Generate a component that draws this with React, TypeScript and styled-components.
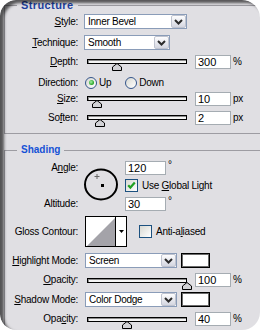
import React from "react";
import styled, { createGlobalStyle } from "styled-components";

const GlobalStyle = createGlobalStyle`
  * { box-sizing: border-box; }
  html, body { margin: 0; padding: 0; background: #ffffff; }
  body { font-family: "Liberation Sans", Arial, sans-serif; }
`;

const Frame = styled.div`
  position: relative;
  width: 260px;
  height: 330px;
  overflow: hidden;
  border-radius: 16px 18px 18px 16px;
  background: #e0dfe3;
  color: #000;
  font-size: 10px;
  letter-spacing: -0.25px;

  &::after {
    content: "";
    position: absolute;
    inset: 0;
    border-radius: inherit;
    box-shadow: inset 4px 3px 3px rgba(0, 0, 0, 0.62);
    pointer-events: none;
  }
`;

const Group = styled.fieldset<{ $mt: number; $pb?: number; $closed?: boolean }>`
  min-width: 0;
  margin: ${(p) => p.$mt}px 0 0 4px;
  padding: 0 0 ${(p) => p.$pb ?? 0}px 0;
  border: 0 solid #9d9ca2;
  border-width: 1px 0 ${(p) => (p.$closed ? 1 : 0)}px 1px;
`;

const Legend = styled.legend<{ $top?: boolean }>`
  margin-left: 12px;
  padding: 0 4px;
  font-weight: bold;
  font-size: ${(p) => (p.$top ? 11 : 10)}px;
  letter-spacing: ${(p) => (p.$top ? 0.4 : 0)}px;
  line-height: 12px;
  color: ${(p) => (p.$top ? "#1d3f9e" : "#1652d6")};
`;

const Content = styled.div<{ $pt: number }>`
  padding-top: ${(p) => p.$pt}px;
`;

const Row = styled.div<{ $mt?: number; $h?: number }>`
  display: flex;
  align-items: center;
  height: ${(p) => p.$h ?? 15}px;
  margin-top: ${(p) => p.$mt ?? 0}px;
`;

const Label = styled.span`
  flex: none;
  width: 73px;
  margin-right: 6px;
  text-align: right;
  white-space: nowrap;
  line-height: 12px;
`;

const Key = styled.span`
  text-decoration: underline;
  text-underline-offset: 1px;
`;

const Select = styled.div<{ $w: number; $ml?: number }>`
  display: flex;
  align-items: center;
  flex: none;
  width: ${(p) => p.$w}px;
  height: 15px;
  margin-left: ${(p) => p.$ml ?? 0}px;
  padding-left: 3px;
  border: 1px solid #8a9cb8;
  background: #ffffff;
  line-height: 13px;
`;

const SelectValue = styled.span`
  flex: 1;
  white-space: nowrap;
`;

const SelectButton = styled.span`
  display: flex;
  align-items: center;
  justify-content: center;
  width: 15px;
  height: 13px;
  border: 1px solid #bfc3cf;
  border-radius: 2px;
  background: linear-gradient(#fdfdfe, #d4d6e0);
`;

const Track = styled.div`
  position: relative;
  flex: none;
  width: 100px;
  height: 5px;
  margin: 0 8px 0 3px;
  border: 1px solid #000;
  background: #f4f4f4;
  box-shadow: inset 1px 1px 0 #8c8c8c;
`;

const Thumb = styled.svg`
  position: absolute;
  top: 3px;
`;

const NumInput = styled.input<{ $w?: number }>`
  flex: none;
  width: ${(p) => p.$w ?? 36}px;
  height: 14px;
  margin: 0;
  padding: 0 0 0 2px;
  border: 1px solid #a5acb2;
  background: #ffffff;
  color: #000;
  font: 11px "Liberation Sans", Arial, sans-serif;
  outline: none;
`;

const Unit = styled.span<{ $sup?: boolean }>`
  margin-left: 2px;
  align-self: ${(p) => (p.$sup ? "flex-start" : "center")};
  line-height: ${(p) => (p.$sup ? 8 : 12)}px;
`;

const RadioOption = styled.span<{ $mr?: number; $ml?: number }>`
  display: flex;
  align-items: center;
  gap: 2px;
  margin: 0 ${(p) => p.$mr ?? 0}px 0 ${(p) => p.$ml ?? 0}px;
`;

const Radio = styled.span<{ $on?: boolean }>`
  display: flex;
  align-items: center;
  justify-content: center;
  width: 12px;
  height: 12px;
  border: 1px solid #34558b;
  border-radius: 50%;
  background: linear-gradient(135deg, #d8d8d2, #ffffff);

  &::after {
    content: "";
    display: ${(p) => (p.$on ? "block" : "none")};
    width: 5px;
    height: 5px;
    border-radius: 50%;
    background: radial-gradient(circle at 40% 40%, #a6f0a6, #21a121 70%);
  }
`;

const CheckOption = styled.span<{ $ml?: number }>`
  display: flex;
  align-items: center;
  gap: 4px;
  margin-left: ${(p) => p.$ml ?? 0}px;
`;

const CheckText = styled.span`
  white-space: nowrap;
`;

const Check = styled.span`
  display: flex;
  align-items: center;
  justify-content: center;
  width: 13px;
  height: 13px;
  border: 1px solid #1c5180;
  background: linear-gradient(135deg, #d8d8d2, #ffffff);
`;

const AngleGrid = styled.div`
  display: grid;
  grid-template-columns: 79px 41px auto;
  grid-template-rows: 14px 17px 19px;
  margin-top: 5px;
`;

const GridLabel = styled(Label)<{ $row: number }>`
  grid-column: 1;
  grid-row: ${(p) => p.$row};
  align-self: end;
  line-height: 14px;
`;

const Dial = styled.svg`
  grid-column: 2;
  grid-row: 1 / 4;
  margin-top: 6px;
`;

const Cell = styled.div<{ $row: number }>`
  display: flex;
  align-items: center;
  grid-column: 3;
  grid-row: ${(p) => p.$row};
  align-self: end;
`;

const Contour = styled.div`
  display: flex;
  flex: none;
  width: 42px;
  height: 31px;
  margin-left: 1px;
  border: 1px solid #000;
  background: #ffffff;
`;

const ContourArrow = styled.span`
  display: flex;
  align-items: center;
  justify-content: center;
  flex: 1;
  border-left: 1px solid #000;
`;

const Swatch = styled.span`
  flex: none;
  width: 29px;
  height: 15px;
  margin-left: 4px;
  border: 1px solid #000;
  background: #ffffff;
  box-shadow: inset 0 0 0 1px #6b6b6b;
`;

const accel = (text: string, i?: number) =>
  i === undefined ? (
    text
  ) : (
    <>
      {text.slice(0, i)}
      <Key>{text[i]}</Key>
      {text.slice(i + 1)}
    </>
  );

const Chevron = () => (
  <svg width="9" height="6" viewBox="0 0 9 6">
    <polyline points="1,1 4.5,4.5 8,1" fill="none" stroke="#2b2b2b" strokeWidth="2" />
  </svg>
);

const Dropdown = ({ value, w, ml }: { value: string; w: number; ml?: number }) => (
  <Select $w={w} $ml={ml}>
    <SelectValue>{value}</SelectValue>
    <SelectButton>
      <Chevron />
    </SelectButton>
  </Select>
);

interface SliderRowProps {
  label: string;
  k?: number;
  value: string;
  unit: string;
  pos: number;
  mt: number;
  h?: number;
}

const SliderRow = ({ label, k, value, unit, pos, mt, h }: SliderRowProps) => (
  <Row $mt={mt} $h={h}>
    <Label>{accel(label, k)}</Label>
    <Track>
      <Thumb width="10" height="8" viewBox="0 0 10 8" style={{ left: Math.round(pos * 100) - 6 }}>
        <path d="M5 0.5 L9.5 4 V7.5 H0.5 V4 Z" fill="#d2d2d6" stroke="#000" strokeWidth="1" />
      </Thumb>
    </Track>
    <NumInput readOnly value={value} />
    <Unit>{unit}</Unit>
  </Row>
);

const Tick = () => (
  <svg width="9" height="9" viewBox="0 0 9 9">
    <polyline points="1.2,4.2 3.4,6.6 7.8,1.6" fill="none" stroke="#21a121" strokeWidth="2.2" />
  </svg>
);

const App = () => {
  return (
    <>
      <GlobalStyle />
      <Frame>
        <Group $mt={-1} $pb={8} $closed>
          <Legend $top>Structure</Legend>
          <Content $pt={3}>
            <Row>
              <Label>{accel("Style:", 0)}</Label>
              <Dropdown value="Inner Bevel" w={103} />
            </Row>
            <Row $mt={6}>
              <Label>{accel("Technique:", 0)}</Label>
              <Dropdown value="Smooth" w={86} />
            </Row>
            <SliderRow label="Depth:" k={0} value="300" unit="%" pos={0.3} mt={4} />
            <Row $mt={6}>
              <Label>Direction:</Label>
              <RadioOption $ml={1} $mr={14}>
                <Radio $on />
                Up
              </RadioOption>
              <RadioOption>
                <Radio />
                Down
              </RadioOption>
            </Row>
            <SliderRow label="Size:" k={0} value="10" unit="px" pos={0.1} mt={1} />
            <SliderRow label="Soften:" k={2} value="2" unit="px" pos={0.13} mt={4} />
          </Content>
        </Group>

        <Group $mt={10}>
          <Legend>Shading</Legend>
          <AngleGrid>
            <GridLabel $row={1}>{accel("Angle:", 1)}</GridLabel>
            <Dial width="36" height="34" viewBox="0 0 36 34">
              <ellipse cx="17" cy="17.5" rx="16" ry="15" fill="none" stroke="#000" strokeWidth="2" />
              <path d="M10.5 9.5 H15.5 M13 7 V12" stroke="#666" strokeWidth="1" />
              <rect x="17" y="17" width="3" height="3" fill="#000" />
            </Dial>
            <Cell $row={1}>
              <NumInput readOnly value="120" $w={41} />
              <Unit $sup>°</Unit>
            </Cell>
            <Cell $row={2}>
              <CheckOption>
                <Check>
                  <Tick />
                </Check>
                <CheckText>{accel("Use Global Light", 4)}</CheckText>
              </CheckOption>
            </Cell>
            <GridLabel $row={3}>Altitude:</GridLabel>
            <Cell $row={3}>
              <NumInput readOnly value="30" $w={41} />
              <Unit $sup>°</Unit>
            </Cell>
          </AngleGrid>

          <Row $mt={5} $h={31}>
            <Label>Gloss Contour:</Label>
            <Contour>
              <svg width="29" height="29" viewBox="0 0 29 29">
                <rect width="29" height="29" fill="#ffffff" />
                <polygon points="1,29 29,1 29,29" fill="#a4a3a9" />
              </svg>
              <ContourArrow>
                <svg width="5" height="3" viewBox="0 0 5 3">
                  <polygon points="0,0 5,0 2.5,3" fill="#000" />
                </svg>
              </ContourArrow>
            </Contour>
            <CheckOption $ml={12}>
              <Check />
              <CheckText>{accel("Anti-aliased", 6)}</CheckText>
            </CheckOption>
          </Row>

          <Row $mt={6}>
            <Label>{accel("Highlight Mode:", 0)}</Label>
            <Dropdown value="Screen" w={92} ml={1} />
            <Swatch />
          </Row>
          <SliderRow label="Opacity:" k={0} value="100" unit="%" pos={1} mt={5} h={14} />
          <Row $mt={5}>
            <Label>{accel("Shadow Mode:", 0)}</Label>
            <Dropdown value="Color Dodge" w={92} ml={1} />
            <Swatch />
          </Row>
          <SliderRow label="Opacity:" k={3} value="40" unit="%" pos={0.4} mt={5} h={14} />
        </Group>
      </Frame>
    </>
  );
};

export default App;
